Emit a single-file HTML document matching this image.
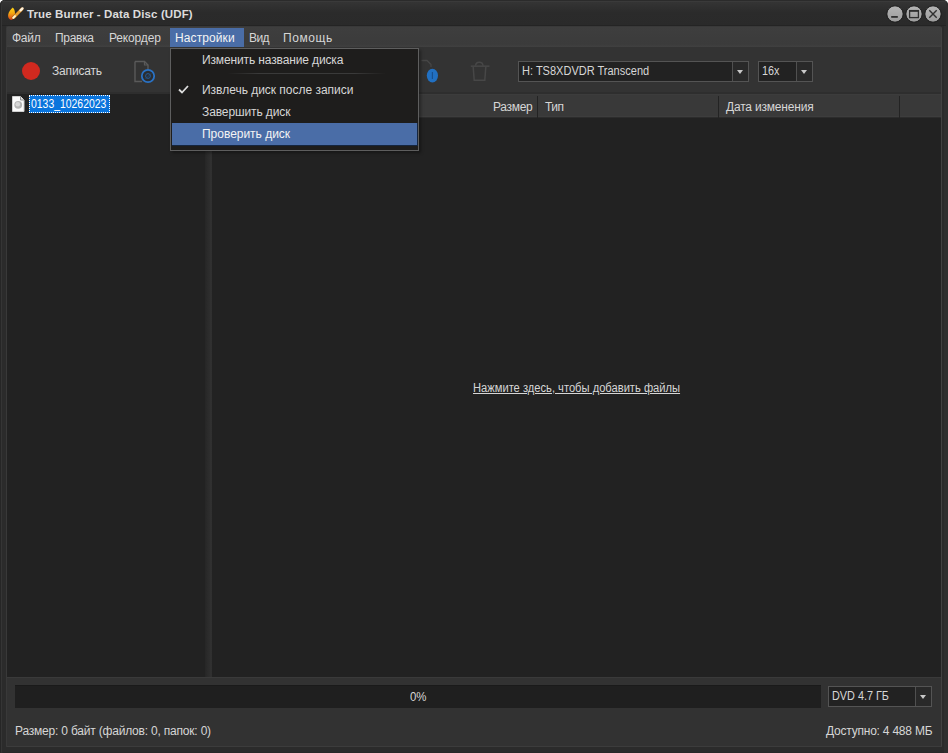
<!DOCTYPE html>
<html><head><meta charset="utf-8">
<style>
*{margin:0;padding:0;box-sizing:border-box}
html,body{width:948px;height:753px;overflow:hidden;background:#ffffff;font-family:"Liberation Sans",sans-serif;}
.abs{position:absolute}
#win{position:absolute;left:0;top:0;width:948px;height:753px;background:#2b2b2b;border-radius:5px 5px 1px 1px;overflow:hidden;
  box-shadow:inset 1px 0 0 #262626, inset 2px 0 0 #353535, inset -4px 0 0 #2f2f2f, inset 0 -1px 0 #282828;}
.t{position:absolute;white-space:nowrap;font-size:12px;color:#d6d6d6;line-height:14px}
.combo{position:absolute;background:#222222;border:1px solid #545454}
.cbtn{position:absolute;top:0;bottom:0;right:0;width:16px;background:#292929;border-left:1px solid #505050}
.arr{position:absolute;left:4px;top:8px;width:0;height:0;border-left:3.5px solid transparent;border-right:3.5px solid transparent;border-top:4px solid #c8c8c8}
</style></head><body>
<div id="win">
  <!-- title bar -->
  <div class="abs" style="left:2px;top:1px;width:944px;height:1px;background:#3a3a3a"></div>
  <div class="abs" style="left:2px;top:2px;width:944px;height:23px;background:linear-gradient(#343434,#2b2b2b 45%,#2a2a2a)"></div>
  <div class="abs" style="left:2px;top:25px;width:944px;height:1px;background:#242424"></div>
  <!-- app icon -->
  <svg class="abs" style="left:7px;top:6px" width="18" height="16" viewBox="0 0 18 16">
    <defs><linearGradient id="fl" x1="0" y1="0" x2="0" y2="1"><stop offset="0" stop-color="#ffd414"/><stop offset="0.45" stop-color="#f6a812"/><stop offset="0.8" stop-color="#e4661a"/><stop offset="1" stop-color="#c8401a"/></linearGradient></defs>
    <path d="M5.8 1.6 C7.8 3.5 8.3 6.5 7.8 9.5 C7.3 12.5 5.6 14.1 4 13.9 C2 13.6 0.9 11.5 1.1 9 C1.4 6 3.8 3.5 5.8 1.6 Z" fill="url(#fl)"/>
    <path d="M6.6 11.4 L15 3" stroke="#5a2a08" stroke-width="3.6" stroke-linecap="round" opacity="0.5"/>
    <path d="M6.6 11.4 L15 3" stroke="#eaa132" stroke-width="2.8" stroke-linecap="round"/>
    <path d="M13.6 4.3 L15.5 2.4" stroke="#fff2dc" stroke-width="2.4" stroke-linecap="round"/>
    <path d="M6.2 11.9 L8 10.1" stroke="#fff6d4" stroke-width="2" stroke-linecap="round"/>
  </svg>
  <div class="t" style="left:27px;top:7px;font-weight:bold;font-size:11.5px;color:#dcdcdc;letter-spacing:0.12px">True Burner - Data Disc (UDF)</div>
  <!-- window buttons -->
  <svg class="abs" style="left:884px;top:3px" width="60" height="22" viewBox="0 0 60 22">
    <defs><linearGradient id="bg1" x1="0" y1="0" x2="0" y2="1"><stop offset="0" stop-color="#b4b4b4"/><stop offset="1" stop-color="#9c9c9c"/></linearGradient></defs>
    <g stroke="#181818" stroke-width="1" fill="url(#bg1)">
      <circle cx="11" cy="11" r="8.2"/>
      <circle cx="30" cy="11" r="8.2"/>
      <circle cx="49" cy="11" r="8.2"/>
    </g>
    <rect x="7.2" y="13" width="6.6" height="1.8" fill="#303030"/>
    <rect x="25.6" y="7.6" width="8.8" height="7" fill="none" stroke="#303030" stroke-width="1.3"/>
    <rect x="25.6" y="7.2" width="8.8" height="1.6" fill="#303030"/>
    <path d="M45.3 7.3 L52.7 14.7 M52.7 7.3 L45.3 14.7" stroke="#303030" stroke-width="1.4"/>
  </svg>

  <!-- content box -->
  <div class="abs" style="left:6px;top:26px;width:936px;height:721px;background:#323232;border:1px solid #393939;border-right-color:#424242;border-radius:2px 3px 0 0"></div>
  <!-- menubar -->
  <div class="abs" style="left:7px;top:27px;width:934px;height:20px;background:linear-gradient(#3e3e3e,#3b3b3b 85%,#404040)"></div>
  <div class="t" style="left:12px;top:31px;letter-spacing:-0.27px">Файл</div>
  <div class="t" style="left:55px;top:31px;letter-spacing:-0.3px">Правка</div>
  <div class="t" style="left:109px;top:31px;letter-spacing:-0.16px">Рекордер</div>
  <div class="abs" style="left:170px;top:28px;width:74px;height:19px;background:#4a6da7"></div>
  <div class="abs" style="left:170px;top:47px;width:74px;height:1px;background:#1b2f4d"></div>
  <div class="t" style="left:175px;top:31px;color:#f4f4f4;letter-spacing:0.1px">Настройки</div>
  <div class="t" style="left:249px;top:31px;letter-spacing:-0.55px">Вид</div>
  <div class="t" style="left:283px;top:31px;letter-spacing:0.6px">Помощь</div>

  <!-- toolbar -->
  <div class="abs" style="left:7px;top:47px;width:934px;height:45px;background:#333333"></div>
  <div class="abs" style="left:7px;top:92px;width:934px;height:2px;background:#2e2e2e"></div>
  <div class="abs" style="left:22px;top:62px;width:18px;height:18px;border-radius:50%;background:#d0291f"></div>
  <div class="t" style="left:52px;top:64px;letter-spacing:-0.17px">Записать</div>
  <svg class="abs" style="left:130px;top:57px" width="30" height="30" viewBox="0 0 30 30">
    <path d="M5 4.5 H14.5 L18 8 V12 M5 4.5 V24.5 H12" fill="none" stroke="#5a5a5a" stroke-width="1.4"/>
    <path d="M14.5 4.5 V8 H18" fill="none" stroke="#5a5a5a" stroke-width="1.2"/>
    <circle cx="18" cy="19" r="6.2" fill="#2a2d31" stroke="#2a72c4" stroke-width="1.8"/>
    <circle cx="18" cy="19" r="2.4" fill="none" stroke="#235b99" stroke-width="1"/>
    <path d="M15.5 22 L21 16.5" stroke="#2a4f78" stroke-width="0.8"/>
  </svg>
  <svg class="abs" style="left:418px;top:55px" width="30" height="32" viewBox="0 0 30 32">
    <path d="M3.5 5.5 H9 L13 9.5 V12" fill="none" stroke="#464646" stroke-width="1.3"/>
    <ellipse cx="14.4" cy="20.6" rx="5.6" ry="6.8" fill="#2170c2"/>
    <rect x="13.8" y="17" width="1.2" height="7" fill="#17508f"/>
  </svg>
  <svg class="abs" style="left:466px;top:57px" width="30" height="28" viewBox="0 0 30 28">
    <g fill="none" stroke="#474747" stroke-width="1.5">
      <path d="M4.8 9.2 H23.5"/>
      <path d="M9.5 8.8 C9.8 4 16.8 4 17 8.8"/>
      <path d="M7.2 10 L8.2 23.3 H18.8 L19.8 10"/>
    </g>
  </svg>
  <!-- drive combo -->
  <div class="combo" style="left:518px;top:61px;width:231px;height:21px"><div class="cbtn"><div class="arr"></div></div></div>
  <div class="t" style="left:522px;top:64px;transform:scaleX(0.918);transform-origin:0 0">H: TS8XDVDR Transcend</div>
  <div class="combo" style="left:758px;top:61px;width:55px;height:21px"><div class="cbtn"><div class="arr"></div></div></div>
  <div class="t" style="left:762px;top:64px;transform:scaleX(0.9);transform-origin:0 0">16x</div>

  <!-- tree -->
  <div class="abs" style="left:7px;top:94px;width:199px;height:583px;background:#222222"></div>
  <svg class="abs" style="left:11px;top:95px" width="16" height="18" viewBox="0 0 16 18">
    <path d="M1.5 1.5 H9.5 L13 5 V16.5 H1.5 Z" fill="#fafafa" stroke="#cfcfcf" stroke-width="1"/>
    <path d="M9.5 1.5 V5 H13" fill="#e0e0e0" stroke="#8a8a8a" stroke-width="0.9"/>
    <circle cx="7.2" cy="9.8" r="3.9" fill="#b4b4b4"/>
    <circle cx="6.8" cy="9.2" r="2.3" fill="#d6d6d6"/>
  </svg>
  <div class="abs" style="left:29px;top:95px;width:81px;height:18px;background:#0a74dc;border:1px dotted #ffffff"></div>
  <div class="t" style="left:31px;top:97px;color:#ffffff;transform:scaleX(0.868);transform-origin:0 0">0133_10262023</div>
  <!-- splitter -->
  <div class="abs" style="left:205px;top:94px;width:7px;height:583px;background:linear-gradient(90deg,#262626,#2a2a2a 30%,#2e2e2e 70%,#333 90%,#262626)"></div>

  <!-- list -->
  <div class="abs" style="left:212px;top:94px;width:729px;height:583px;background:#222222"></div>
  <div class="abs" style="left:212px;top:94px;width:729px;height:22px;background:#393939;border-top:1px solid #3c3c3c"></div>
  <div class="abs" style="left:212px;top:116px;width:729px;height:1px;background:#3d3d3d"></div>
  <div class="abs" style="left:212px;top:117px;width:729px;height:1px;background:#2c2c2c"></div>
  <div class="abs" style="left:537px;top:96px;width:1px;height:22px;background:#232323"></div>
  <div class="abs" style="left:718px;top:96px;width:1px;height:22px;background:#232323"></div>
  <div class="abs" style="left:899px;top:96px;width:1px;height:22px;background:#232323"></div>
  <div class="t" style="left:493px;top:100px;letter-spacing:-0.3px">Размер</div>
  <div class="t" style="left:545px;top:100px;letter-spacing:-0.5px">Тип</div>
  <div class="t" style="left:726px;top:100px;letter-spacing:-0.19px">Дата изменения</div>
  <div class="t" style="left:473px;top:381px;transform:scaleX(0.93);transform-origin:0 0;text-decoration:underline">Нажмите здесь, чтобы добавить файлы</div>

  <!-- bottom -->
  <div class="abs" style="left:7px;top:677px;width:934px;height:1px;background:#3a3a3a"></div>
  <div class="abs" style="left:15px;top:685px;width:806px;height:23px;background:#1f1f1f;border-top:1px solid #1a1a1a"></div>
  <div class="t" style="left:410px;top:690px;transform:scaleX(0.953);transform-origin:0 0">0%</div>
  <div class="combo" style="left:828px;top:686px;width:104px;height:21px"><div class="cbtn"><div class="arr"></div></div></div>
  <div class="t" style="left:832px;top:689px;transform:scaleX(0.903);transform-origin:0 0">DVD 4.7 ГБ</div>
  <div class="abs" style="left:7px;top:746px;width:934px;height:1px;background:#3c3c3c"></div>
  <div class="t" style="left:15px;top:724px;letter-spacing:-0.2px">Размер: 0 байт (файлов: 0, папок: 0)</div>
  <div class="t" style="left:826px;top:724px;letter-spacing:-0.22px">Доступно: 4 488 МБ</div>

  <!-- menu dropdown -->
  <div class="abs" style="left:170px;top:48px;width:249px;height:103px;background:#1e1d1c;border:1px solid #5e5e5e;box-shadow:2px 2px 3px rgba(0,0,0,0.35)"></div>
  <div class="t" style="left:202px;top:53px;letter-spacing:-0.13px">Изменить название диска</div>
  <div class="abs" style="left:227px;top:73px;width:159px;height:1px;background:linear-gradient(90deg,#1e1d1c,#3a3a3a 20%,#3a3a3a 80%,#1e1d1c)"></div>
  <svg class="abs" style="left:178px;top:85px" width="11" height="9" viewBox="0 0 11 9"><path d="M1 4.5 L4 7.5 L10 1" fill="none" stroke="#dcdcdc" stroke-width="1.8"/></svg>
  <div class="t" style="left:202px;top:83px;letter-spacing:-0.02px">Извлечь диск после записи</div>
  <div class="t" style="left:202px;top:105px;letter-spacing:-0.11px">Завершить диск</div>
  <div class="abs" style="left:172px;top:123px;width:246px;height:23px;background:#152640"></div>
  <div class="abs" style="left:172px;top:123px;width:245px;height:22px;background:#4a6da7"></div>
  <div class="t" style="left:202px;top:127px;color:#f4f4f4;letter-spacing:-0.02px">Проверить диск</div>
</div>
</body></html>
